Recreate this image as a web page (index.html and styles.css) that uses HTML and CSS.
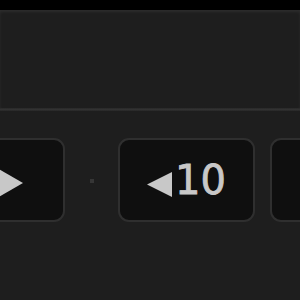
FILE: index.html
```html
<!DOCTYPE html>
<html>
<head>
<meta charset="utf-8">
<link rel="stylesheet" href="styles.css">
</head>
<body>
<div class="topbar"></div>
<div class="panel"></div>
<div class="divider"></div>
<div class="controls">
  <div class="row">
    <button class="btn btn-play" aria-label="Play">
      <svg class="tri-play" width="26" height="30" viewBox="0 0 26 30"><polygon points="0,0 26,15 0,30" fill="#c8c8c8"/></svg>
    </button>
    <span class="sep"></span>
    <button class="btn">
      <svg class="tri" width="25" height="25" viewBox="0 0 25 25"><polygon points="0,12.5 25,0 25,25" fill="#c8c8c8"/></svg>
      <span class="num">10</span>
    </button>
    <button class="btn">
      <span class="num">10</span>
      <svg class="tri" width="25" height="25" viewBox="0 0 25 25"><polygon points="0,0 25,12.5 0,25" fill="#c8c8c8"/></svg>
    </button>
  </div>
</div>
</body>
</html>
```
FILE: styles.css
```css
html, body {
  margin: 0;
  padding: 0;
  background: #1e1e1e;
  overflow: hidden;
  width: 300px;
  height: 300px;
}
.topbar {
  height: 10px;
  background: #000;
}
.panel {
  height: 98px;
  background: #1e1e1e;
  box-shadow: inset 0 2px 3px rgba(60,60,60,0.5);
}
.divider {
  height: 3px;
  background: linear-gradient(#282828, #323232, #272727);
}
.controls {
  padding-top: 27px;
}
.row {
  display: flex;
  align-items: center;
  margin-left: -72px;
  width: 600px;
}
.btn {
  box-sizing: border-box;
  width: 137px;
  height: 84px;
  flex: none;
  background: #0f0f0f;
  border: 2px solid #2f2f2f;
  border-radius: 11px;
  display: flex;
  align-items: center;
  justify-content: center;
  padding: 0;
  margin: 0 15px 0 0;
  font-family: "DejaVu Sans", sans-serif;
  color: #c8c8c8;
}
.btn-play {
  justify-content: flex-end;
  padding-right: 40px;
  margin-right: 0;
}
.tri-play {
  display: block;
  margin-top: 6px;
}
.sep {
  width: 4px;
  height: 4px;
  background: #363636;
  margin: 2px 24px 0 25px;
  flex: none;
}
.tri {
  display: block;
  margin-top: 8px;
}
.num {
  font-size: 40px;
  font-weight: normal;
  -webkit-text-stroke: 0.8px #c8c8c8;
  line-height: 40px;
  margin: 0 0 0 3px;
}
.btn .num:first-child {
  margin: 0 3px 0 0;
}
```
